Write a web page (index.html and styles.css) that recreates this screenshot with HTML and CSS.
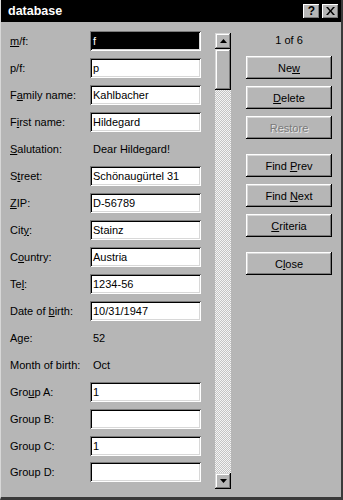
FILE: index.html
```html
<!DOCTYPE html>
<html>
<head>
<meta charset="utf-8">
<link rel="stylesheet" href="styles.css">
</head>
<body>
<div class="window">
  <div class="titlebar">
    <span class="title">database</span>
    <div class="tbtns">
      <span class="tbtn help">?</span>
      <span class="tbtn close"><svg width="9" height="8" viewBox="0 0 9 8"><path d="M0 0h2l2.5 3 2.5-3h2L5.5 4 9 8H7L4.5 5 2 8H0l3.5-4z" fill="#000"/></svg></span>
    </div>
  </div>
  <div class="main">
    <div class="form">
      <div class="row"><span class="label"><u>m</u>/f:</span><span class="field sel"><span class="hl">f</span></span></div>
      <div class="row"><span class="label">p/f:</span><span class="field">p</span></div>
      <div class="row"><span class="label">F<u>a</u>mily name:</span><span class="field">Kahlbacher</span></div>
      <div class="row"><span class="label">F<u>i</u>rst name:</span><span class="field">Hildegard</span></div>
      <div class="row"><span class="label"><u>S</u>alutation:</span><span class="value">Dear Hildegard!</span></div>
      <div class="row"><span class="label">S<u>t</u>reet:</span><span class="field">Schönaugürtel 31</span></div>
      <div class="row"><span class="label"><u>Z</u>IP:</span><span class="field">D-56789</span></div>
      <div class="row"><span class="label">Cit<u>y</u>:</span><span class="field">Stainz</span></div>
      <div class="row"><span class="label">C<u>o</u>untry:</span><span class="field">Austria</span></div>
      <div class="row"><span class="label">Te<u>l</u>:</span><span class="field">1234-56</span></div>
      <div class="row"><span class="label">Date of <u>b</u>irth:</span><span class="field">10/31/1947</span></div>
      <div class="row"><span class="label">Age:</span><span class="value">52</span></div>
      <div class="row"><span class="label">Month of birth:</span><span class="value">Oct</span></div>
      <div class="row"><span class="label">Gro<u>u</u>p A:</span><span class="field">1</span></div>
      <div class="row"><span class="label">Group B:</span><span class="field"></span></div>
      <div class="row"><span class="label">Group C:</span><span class="field">1</span></div>
      <div class="row"><span class="label">Group D:</span><span class="field"></span></div>
    </div>
    <div class="scrollbar">
      <span class="sbtn"><svg width="7" height="4" viewBox="0 0 7 4"><path d="M3.5 0L7 4H0z" fill="#000"/></svg></span>
      <span class="thumb"></span>
      <span class="track"></span>
      <span class="sbtn"><svg width="7" height="4" viewBox="0 0 7 4"><path d="M0 0h7L3.5 4z" fill="#000"/></svg></span>
    </div>
    <div class="actions">
      <div class="counter">1 of 6</div>
      <span class="btn"><span>Ne<u>w</u></span></span>
      <span class="btn"><span><u>D</u>elete</span></span>
      <span class="btn disabled"><span>Restore</span></span>
      <span class="btn group"><span>Find <u>P</u>rev</span></span>
      <span class="btn"><span>Find <u>N</u>ext</span></span>
      <span class="btn"><span><u>C</u>riteria</span></span>
      <span class="btn group"><span>C<u>l</u>ose</span></span>
    </div>
  </div>
</div>
</body>
</html>
```

FILE: styles.css
```css
html, body {
  margin: 0;
  padding: 0;
  background: #b6b6b6;
}
.window {
  width: 343px;
  height: 500px;
  box-sizing: border-box;
  background: #b6b6b6;
  border-left: 1px solid #d8d8d8;
  border-right: 2px solid #3a3a3a;
  border-bottom: 3px solid #3a3a3a;
  font-family: "Liberation Sans", Arial, sans-serif;
  font-size: 11px;
  color: #000;
  display: flex;
  flex-direction: column;
}
.titlebar {
  height: 22px;
  background: #000;
  display: flex;
  align-items: center;
  justify-content: space-between;
  padding: 0 2px 0 7px;
  flex-shrink: 0;
}
.title {
  color: #fff;
  font-weight: bold;
  font-size: 12.5px;
}
.tbtns {
  display: flex;
  gap: 2px;
}
.tbtn {
  width: 17px;
  height: 15px;
  box-sizing: border-box;
  background: #b6b6b6;
  box-shadow: inset -1px -1px #000, inset 1px 1px #fff, inset -2px -2px #7a7a7a;
  display: flex;
  align-items: center;
  justify-content: center;
  font-weight: bold;
  font-size: 12px;
  line-height: 1;
}
.main {
  display: flex;
  align-items: flex-start;
  padding-left: 9px;
  flex: 1;
}
.form {
  padding-top: 6px;
  width: 191px;
  flex-shrink: 0;
}
.row {
  display: flex;
  align-items: center;
  height: 26.94px;
}
.label {
  width: 80px;
  flex-shrink: 0;
  white-space: nowrap;
}
.field {
  width: 111px;
  height: 20px;
  box-sizing: border-box;
  background: #fff;
  padding: 0 3px;
  line-height: 20px;
  box-shadow: inset 1px 1px #7a7a7a, inset -1px -1px #fff, inset 2px 2px #000, inset -2px -2px #d8d8d8;
  white-space: nowrap;
}
.field.sel {
  background: #000;
}
.hl {
  color: #fff;
}
.value {
  padding-left: 3px;
}
.scrollbar {
  margin-top: 11px;
  margin-left: 14px;
  width: 16px;
  height: 456px;
  display: flex;
  flex-direction: column;
  flex-shrink: 0;
}
.sbtn, .thumb {
  display: flex;
  align-items: center;
  justify-content: center;
  background: #b6b6b6;
  box-shadow: inset -1px -1px #000, inset 1px 1px #d8d8d8, inset -2px -2px #7a7a7a, inset 2px 2px #fff;
  flex-shrink: 0;
}
.sbtn {
  height: 16px;
}
.thumb {
  height: 41px;
}
.track {
  flex: 1;
  background-color: #b6b6b6;
  background-image: conic-gradient(#f4f4f4 0 25%, #c4c4c4 0 50%, #f4f4f4 0 75%, #c4c4c4 0);
  background-size: 2px 2px;
}
.actions {
  margin-left: 15px;
  width: 86px;
  display: flex;
  flex-direction: column;
  gap: 7px;
  padding-top: 11px;
  flex-shrink: 0;
}
.counter {
  text-align: center;
  height: 14px;
  line-height: 14px;
  margin-bottom: 2px;
}
.btn {
  height: 23px;
  box-sizing: border-box;
  display: flex;
  align-items: center;
  justify-content: center;
  white-space: nowrap;
  background: #b6b6b6;
  box-shadow: inset -1px -1px #000, inset 1px 1px #fff, inset -2px -2px #7a7a7a, inset 2px 2px #d8d8d8;
}
.btn.group {
  margin-top: 8px;
}
.btn.disabled {
  color: #7a7a7a;
  text-shadow: 1px 1px #e8e8e8;
}
```
